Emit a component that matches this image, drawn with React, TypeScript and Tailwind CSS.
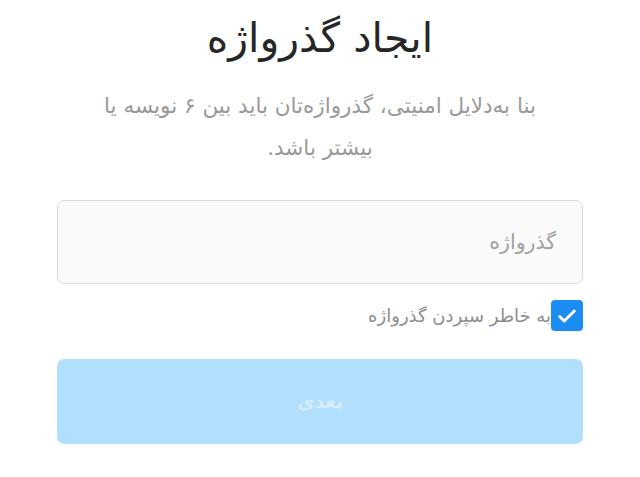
import React from "react";

export default function App() {
  return (
    <div
      dir="rtl"
      className="w-[640px] h-[477px] bg-white flex flex-col items-center"
      style={{ fontFamily: '"DejaVu Sans", sans-serif' }}
    >
      <h1 className="mt-[12px] text-[41px] leading-[52px] text-[#262626]">ایجاد گذرواژه</h1>
      <p className="mt-[21px] w-[460px] text-center text-[21.5px] leading-[42px] text-[#999999]">
        بنا به‌دلایل امنیتی، گذرواژه‌تان باید بین ۶ نویسه یا بیشتر باشد.
      </p>
      <div className="mt-[31px] w-[526px] h-[84px] rounded-[7px] border border-[#dbdbdb] bg-[#fafafa] flex items-center pr-[26px]">
        <span className="text-[20.5px] text-[#a0a0a0]">گذرواژه</span>
      </div>
      <div className="mt-[16px] w-[526px] flex items-center">
        <div className="w-[32px] h-[31px] rounded-[4px] bg-[#1b8cf2] flex items-center justify-center">
          <svg width="22" height="22" viewBox="0 0 24 24" fill="none" stroke="white" strokeWidth="3.2" strokeLinecap="round" strokeLinejoin="round">
            <path d="M4 12.5l5 5L20 6.5" />
          </svg>
        </div>
        <span className="text-[18px] text-[#8e8e8e]">به خاطر سپردن گذرواژه</span>
      </div>
      <div className="mt-[28px] w-[526px] h-[85px] rounded-[7px] bg-[#b2dffc] flex items-center justify-center">
        <span className="text-[19px] font-bold text-[#d6edfc]">بعدی</span>
      </div>
    </div>
  );
}
